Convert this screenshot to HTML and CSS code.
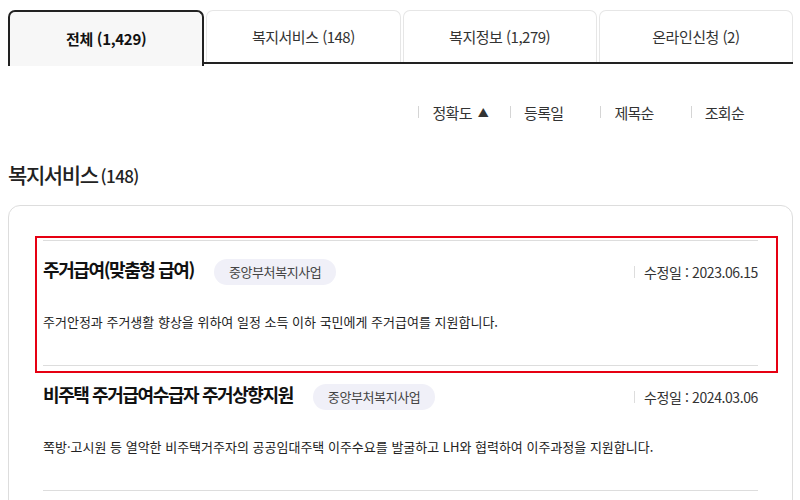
FILE: index.html
```html
<!DOCTYPE html>
<html lang="ko">
<head>
<meta charset="utf-8">
<link rel="stylesheet" href="styles.css">
</head>
<body>
<div class="page">
  <div class="tabs">
    <div class="tab active">전체 (1,429)</div>
    <div class="tab">복지서비스 (148)</div>
    <div class="tab">복지정보 (1,279)</div>
    <div class="tab">온라인신청 (2)</div>
  </div>

  <div class="sort">
    <span class="sort-item first">정확도<span class="arrow">▲</span></span>
    <span class="sort-item">등록일</span>
    <span class="sort-item">제목순</span>
    <span class="sort-item">조회순</span>
  </div>

  <h2 class="section-title">복지서비스<span class="count">(148)</span></h2>

  <div class="card">
    <div class="list">
      <div class="item">
        <div class="item-head">
          <span class="item-title">주거급여(맞춤형 급여)</span>
          <span class="badge">중앙부처복지사업</span>
          <span class="date">수정일 : 2023.06.15</span>
        </div>
        <p class="desc">주거안정과 주거생활 향상을 위하여 일정 소득 이하 국민에게 주거급여를 지원합니다.</p>
        <div class="highlight"></div>
      </div>
      <div class="item">
        <div class="item-head">
          <span class="item-title">비주택 주거급여수급자 주거상향지원</span>
          <span class="badge">중앙부처복지사업</span>
          <span class="date">수정일 : 2024.03.06</span>
        </div>
        <p class="desc">쪽방·고시원 등 열악한 비주택거주자의 공공임대주택 이주수요를 발굴하고 LH와 협력하여 이주과정을 지원합니다.</p>
      </div>
    </div>
  </div>
</div>
</body>
</html>
```

FILE: styles.css
```css
* { box-sizing: border-box; }
html, body { margin: 0; padding: 0; background: #fff; }
body {
  font-family: "Noto Sans CJK KR", "Noto Sans", sans-serif;
  color: #222;
  overflow: hidden;
}
.page {
  width: 793px;
  padding: 10px 0 0 8px;
}
.tabs {
  display: flex;
  gap: 2px;
  height: 54px;
  border-bottom: 2px solid #222;
}
.tab {
  flex: 1;
  display: flex;
  align-items: center;
  justify-content: center;
  border: 1px solid #e6e6e6;
  border-bottom: none;
  border-radius: 7px 7px 0 0;
  font-size: 15px;
  letter-spacing: -0.5px;
  color: #333;
  background: #fff;
}
.tab.active {
  border: 2px solid #222;
  border-bottom: none;
  background: #f7f7f7;
  font-weight: 700;
  color: #111;
  margin-bottom: -2px;
  height: 56px;
  padding-bottom: 2px;
  letter-spacing: -0.3px;
}
.sort {
  display: flex;
  justify-content: flex-end;
  align-items: center;
  height: 22px;
  margin-top: 37px;
  padding-right: 49px;
}
.sort-item {
  display: flex;
  align-items: center;
  font-size: 15px;
  letter-spacing: -0.7px;
  color: #333;
  margin-left: 37px;
}
.sort-item::before {
  content: "";
  width: 1px;
  height: 12px;
  background: #d5d5d5;
  margin-right: 13px;
}
.sort-item.first { margin-left: 0; margin-right: -15px; }
.arrow { font-size: 11px; margin-left: 6px; }
.section-title {
  margin: 36px 0 0;
  font-size: 21px;
  font-weight: 500;
  letter-spacing: -1.4px;
  line-height: 30px;
  color: #222;
}
.count {
  font-size: 17px;
  letter-spacing: -0.6px;
  margin-left: 3px;
}
.card {
  margin-top: 14px;
  border: 1px solid #ddd;
  border-radius: 12px;
  padding: 34px 34px 0 34px;
  height: 320px;
}
.list { border-top: 1px solid #ddd; }
.item {
  position: relative;
  border-bottom: 1px solid #ddd;
  padding: 18px 0 0;
  height: 125px;
}
.item-head {
  display: flex;
  align-items: center;
  height: 26px;
}
.item-title {
  font-size: 18px;
  font-weight: 700;
  letter-spacing: -1.4px;
  color: #111;
  margin-top: -6px;
}
.badge {
  margin-left: 20px;
  height: 26px;
  line-height: 26px;
  padding: 0 15px;
  border-radius: 13px;
  background: #f0f0f8;
  color: #444;
  font-size: 13px;
  letter-spacing: -0.4px;
}
.date {
  margin-left: auto;
  display: flex;
  align-items: center;
  font-size: 14px;
  letter-spacing: -0.4px;
  color: #333;
}
.date::before {
  content: "";
  width: 1px;
  height: 12px;
  background: #ddd;
  margin-right: 9px;
}
.desc {
  margin: 27px 0 0;
  font-size: 13px;
  line-height: 20px;
  letter-spacing: 0;
  color: #222;
}
.highlight {
  position: absolute;
  left: -8px;
  top: -5px;
  right: -20px;
  height: 137px;
  border: 2px solid #e60012;
  pointer-events: none;
}
```
